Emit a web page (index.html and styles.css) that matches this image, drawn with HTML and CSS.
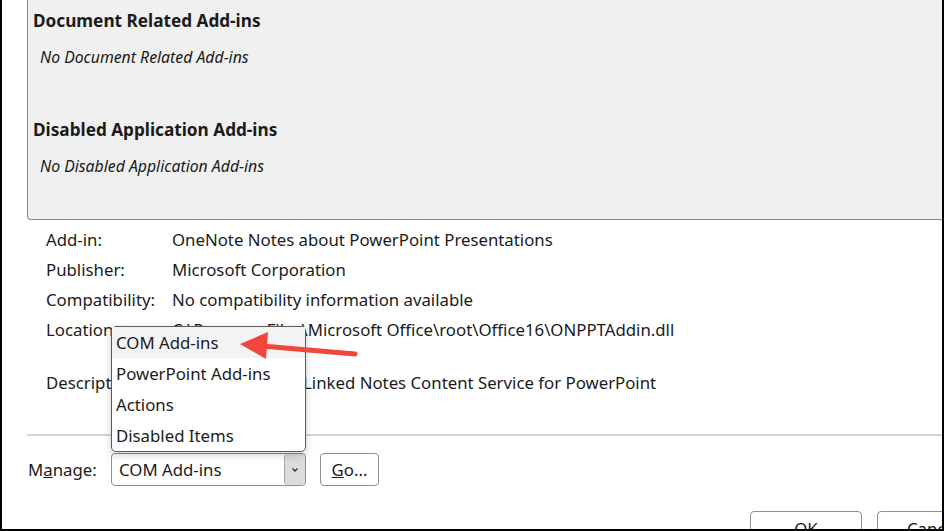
FILE: index.html
```html
<!DOCTYPE html>
<html lang="en">
<head>
    <meta charset="UTF-8">
    <title>COM Add-ins</title>
    <link rel="stylesheet" href="styles.css">
</head>
<body>

    <div class="dialog">
        <div class="addin-list">
            <h3>Document Related Add-ins</h3>
            <div class="empty">No Document Related Add-ins</div>
            <h3 class="second">Disabled Application Add-ins</h3>
            <div class="empty">No Disabled Application Add-ins</div>
        </div>

        <div class="details">
            <div class="row"><span class="label">Add-in:</span><span>OneNote Notes about PowerPoint Presentations</span></div>
            <div class="row"><span class="label">Publisher:</span><span>Microsoft Corporation</span></div>
            <div class="row"><span class="label">Compatibility:</span><span>No compatibility information available</span></div>
            <div class="row"><span class="label">Location:</span><span>C:\Program Files\Microsoft Office\root\Office16\ONPPTAddin.dll</span></div>
            <div class="row desc"><span class="label">Description:</span><span>OneNote Notes, Linked Notes Content Service for PowerPoint</span></div>
        </div>

        <hr class="sep">

        <div class="manage">
            <span class="manage-label">M<u>a</u>nage:</span>
            <div class="select">
                <span>COM Add-ins</span>
                <span class="drop-btn">
                    <svg width="8" height="6" viewBox="0 0 8 6"><path d="M1.5 1.5 L4 4 L6.5 1.5" fill="none" stroke="#333" stroke-width="1.3"/></svg>
                </span>
                <ul class="options">
                    <li class="active">COM Add-ins</li>
                    <li>PowerPoint Add-ins</li>
                    <li>Actions</li>
                    <li>Disabled Items</li>
                </ul>
            </div>
            <button class="go"><u>G</u>o...</button>
        </div>

        <div class="footer">
            <button class="btn">OK</button>
            <button class="btn">Cancel</button>
        </div>

        <svg class="arrow" width="944" height="531" viewBox="0 0 944 531">
            <line x1="355" y1="354" x2="262" y2="346" stroke="#f2453d" stroke-width="5" stroke-linecap="round"/>
            <polygon points="240,344 268,332 266,359" fill="#f2453d"/>
        </svg>
    </div>

</body>
</html>
```

FILE: styles.css
```css
body {
    margin: 0;
    background: #000;
    font-family: "Noto Sans", "Open Sans", sans-serif;
    color: #1b1b1b;
}
.dialog {
    position: relative;
    background: #fff;
    margin: 0 2px 0 2px;
    height: 529px;
    overflow: hidden;
}
.addin-list {
    margin-left: 25px;
    height: 220px;
    background: #f0f0f0;
    border-left: 1px solid #8a8a8a;
    border-bottom: 1px solid #8a8a8a;
    border-bottom-left-radius: 4px;
    padding: 0 0 0 5px;
    box-sizing: border-box;
}
h3 {
    margin: 0;
    padding-top: 9px;
    font-size: 17.2px;
    font-weight: bold;
    line-height: 24px;
}
h3.second {
    padding-top: 51px;
}
.empty {
    font-style: italic;
    font-size: 15.8px;
    line-height: 20px;
    margin: 14px 0 0 7px;
}
.details {
    margin: 4px 0 0 44px;
    font-size: 16.8px;
}
.row {
    display: flex;
    height: 30px;
    align-items: center;
}
.row.desc {
    margin-top: 23px;
}
.label {
    width: 126px;
    flex-shrink: 0;
}
.sep {
    margin: 37px 0 0 25px;
    border: none;
    height: 2px;
    background: #d4d4d4;
}
.manage {
    display: flex;
    align-items: center;
    margin: 17px 0 0 26px;
    font-size: 16.8px;
}
.manage-label {
    width: 83px;
}
.select {
    position: relative;
    width: 195px;
    height: 33px;
    box-sizing: border-box;
    border: 1px solid #8f8f8f;
    border-radius: 4px;
    display: flex;
    align-items: center;
    padding-left: 7px;
}
.select span:first-child {
    flex: 1;
}
.drop-btn {
    width: 20px;
    height: 31px;
    background: #dcdcdc;
    border-left: 1px solid #a8a8a8;
    border-radius: 4px;
    display: flex;
    align-items: center;
    justify-content: center;
}
.options {
    position: absolute;
    left: -1px;
    bottom: 33px;
    width: 195px;
    box-sizing: border-box;
    margin: 0;
    padding: 0;
    list-style: none;
    background: #fff;
    border: 1.5px solid #5a5a5a;
    border-radius: 5px;
    box-shadow: 0 3px 8px rgba(0, 0, 0, 0.2);
}
.options li {
    height: 31px;
    line-height: 31px;
    padding-left: 4px;
}
.options li.active {
    background: #f3f3f3;
}
.go {
    margin-left: 14px;
    width: 59px;
    height: 33px;
    background: #fff;
    border: 1px solid #8f8f8f;
    border-radius: 4px;
    font-family: inherit;
    font-size: 16.8px;
    color: #1b1b1b;
    padding: 0;
}
.footer {
    display: flex;
    gap: 15px;
    margin: 25px 0 0 748px;
}
.btn {
    width: 112px;
    height: 34px;
    flex-shrink: 0;
    background: #fff;
    border: 1px solid #8f8f8f;
    border-radius: 4px;
    font-family: inherit;
    font-size: 16.8px;
    color: #1b1b1b;
}
.arrow {
    position: absolute;
    left: -2px;
    top: 0;
    pointer-events: none;
}
```
